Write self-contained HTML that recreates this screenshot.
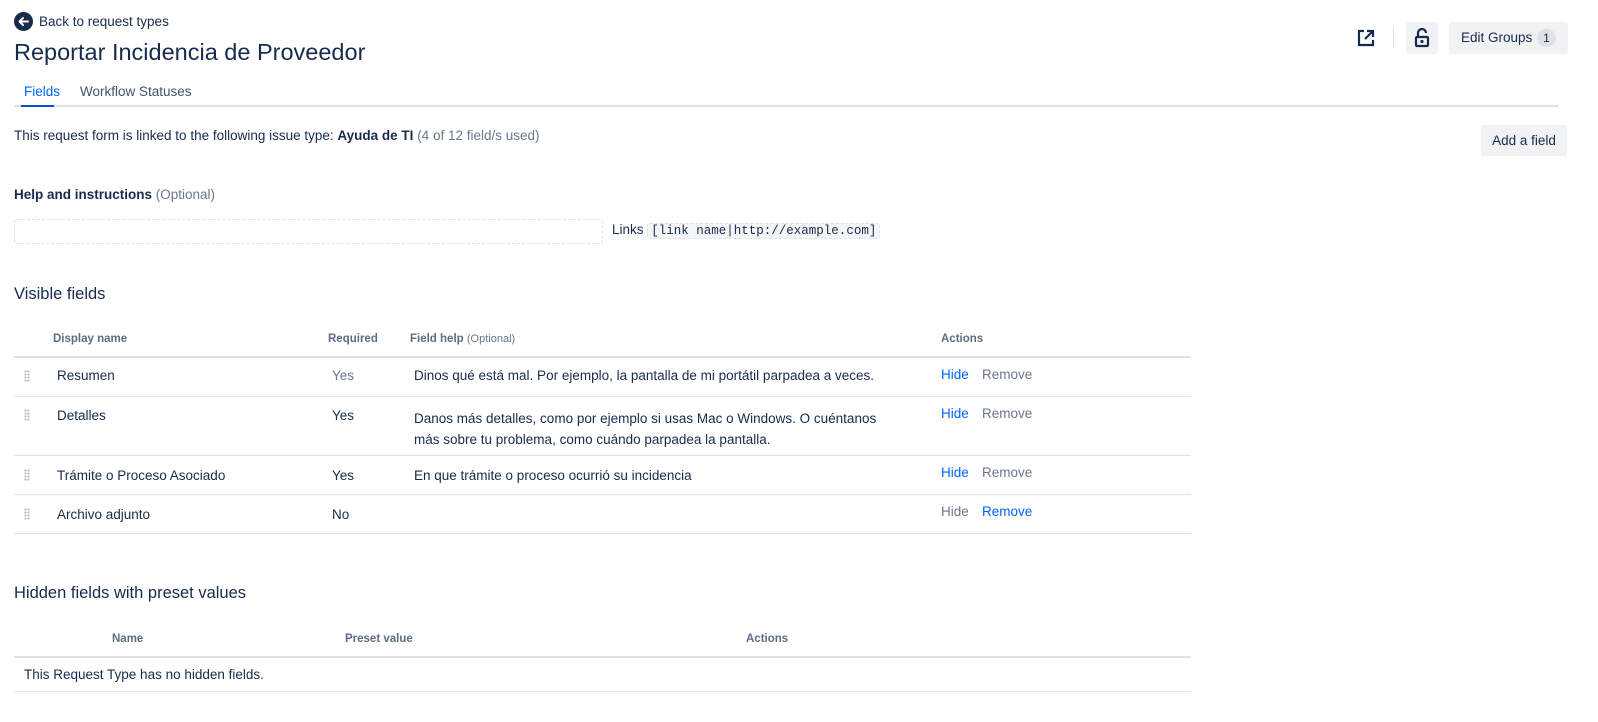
<!DOCTYPE html>
<html><head><meta charset="utf-8"><style>
*{margin:0;padding:0;box-sizing:border-box}
body{width:1598px;height:722px;background:#fff;font-family:"Liberation Sans",sans-serif;color:#172b4d;font-size:13.5px;position:relative;overflow:hidden}
.a{position:absolute;white-space:nowrap}
.g{color:#6b778c}
.h{font-size:11.5px;font-weight:bold;color:#5e6c84}
.line{position:absolute;height:1px;background:#dfe1e6}
.b{color:#0065ff}
.dots{position:absolute;width:6px;height:12px;background-image:radial-gradient(circle,#b3bac5 1px,transparent 1.2px);background-size:3px 3px}
</style></head><body>
<svg class="a" style="left:14px;top:12px" width="19" height="19" viewBox="0 0 19 19"><circle cx="9.5" cy="9.5" r="9.5" fill="#172b4d"/><path d="M14 9.5H5.5M9 6L5.5 9.5 9 13" stroke="#fff" stroke-width="2" fill="none" stroke-linecap="round" stroke-linejoin="round"/></svg>
<div class="a" style="left:39px;top:14px;font-size:13.5px">Back to request types</div>
<div class="a" style="left:14px;top:39px;font-size:23.5px">Reportar Incidencia de Proveedor</div>
<div class="a b" style="left:24px;top:84px;font-size:13.5px">Fields</div>
<div class="a" style="left:80px;top:84px;font-size:13.5px;color:#42526e">Workflow Statuses</div>
<div class="line" style="left:14px;top:105px;width:1544px;height:2px"></div>
<div class="a" style="left:21px;top:105px;width:33px;height:2px;background:#0052cc"></div>
<svg class="a" style="left:1356px;top:28px" width="20" height="20" viewBox="0 0 20 20"><path d="M8 3H3v14h14v-5" stroke="#172b4d" stroke-width="2.2" fill="none"/><path d="M11 3h6v6M17 3L9 11" stroke="#172b4d" stroke-width="2.2" fill="none"/></svg>
<div class="a" style="left:1393px;top:28px;width:1px;height:20px;background:#dfe1e6"></div>
<div class="a" style="left:1406px;top:22px;width:32px;height:32px;background:#f1f2f4;border-radius:3px"></div>
<svg class="a" style="left:1413px;top:27px" width="18" height="22" viewBox="0 0 18 22"><path d="M5 10V6a4 4 0 0 1 8 0" stroke="#172b4d" stroke-width="2.2" fill="none"/><rect x="3" y="10" width="12" height="9" rx="1" stroke="#172b4d" stroke-width="2.2" fill="none"/><circle cx="9" cy="14.5" r="1.6" fill="#172b4d"/></svg>
<div class="a" style="left:1449px;top:22px;width:119px;height:32px;background:#f1f2f4;border-radius:3px"></div>
<div class="a" style="left:1461px;top:30px;color:#172b4d">Edit Groups</div>
<div class="a" style="left:1537px;top:29px;width:19px;height:18px;border-radius:9px;background:#dfe1e6;font-size:12px;text-align:center;line-height:18px">1</div>
<div class="a" style="left:14px;top:128px">This request form is linked to the following issue type: <b>Ayuda de TI</b> <span class="g">(4 of 12 field/s used)</span></div>
<div class="a" style="left:1481px;top:125px;width:86px;height:31px;background:#f1f2f4;border-radius:3px;line-height:31px;text-align:center">Add a field</div>
<div class="a" style="left:14px;top:187px"><b>Help and instructions</b> <span class="g">(Optional)</span></div>
<div class="a" style="left:14px;top:219px;width:589px;height:25px;border:1px dashed #dfe1e6;border-radius:3px"></div>
<div class="a" style="left:612px;top:222px">Links <span style="font-family:'Liberation Mono',monospace;font-size:12.5px;background:#f4f5f7;border:1px dashed #dfe1e6;border-radius:3px;padding:0 3px">[link name|http://example.com]</span></div>
<div class="a" style="left:14px;top:285px;font-size:16.5px">Visible fields</div>
<div class="a h" style="left:53px;top:333px">Display name</div>
<div class="a h" style="left:328px;top:333px">Required</div>
<div class="a h" style="left:410px;top:333px">Field help <span style="font-weight:normal;font-size:11px;color:#6b778c">(Optional)</span></div>
<div class="a h" style="left:941px;top:333px">Actions</div>
<div class="line" style="left:14px;top:356px;width:1177px;height:2px"></div>
<div class="dots" style="left:24px;top:370px"></div>
<div class="a" style="left:57px;top:368px">Resumen</div>
<div class="a g" style="left:332px;top:368px">Yes</div>
<div class="a" style="left:414px;top:368px">Dinos qué está mal. Por ejemplo, la pantalla de mi portátil parpadea a veces.</div>
<div class="a b" style="left:941px;top:367px">Hide</div><div class="a g" style="left:982px;top:367px">Remove</div>
<div class="line" style="left:14px;top:396px;width:1177px"></div>
<div class="dots" style="left:24px;top:409px"></div>
<div class="a" style="left:57px;top:408px">Detalles</div>
<div class="a" style="left:332px;top:408px">Yes</div>
<div class="a" style="left:414px;top:408px;line-height:21px">Danos más detalles, como por ejemplo si usas Mac o Windows. O cuéntanos<br>más sobre tu problema, como cuándo parpadea la pantalla.</div>
<div class="a b" style="left:941px;top:406px">Hide</div><div class="a g" style="left:982px;top:406px">Remove</div>
<div class="line" style="left:14px;top:455px;width:1177px"></div>
<div class="dots" style="left:24px;top:469px"></div>
<div class="a" style="left:57px;top:468px">Trámite o Proceso Asociado</div>
<div class="a" style="left:332px;top:468px">Yes</div>
<div class="a" style="left:414px;top:468px">En que trámite o proceso ocurrió su incidencia</div>
<div class="a b" style="left:941px;top:465px">Hide</div><div class="a g" style="left:982px;top:465px">Remove</div>
<div class="line" style="left:14px;top:494px;width:1177px"></div>
<div class="dots" style="left:24px;top:508px"></div>
<div class="a" style="left:57px;top:507px">Archivo adjunto</div>
<div class="a" style="left:332px;top:507px">No</div>
<div class="a g" style="left:941px;top:504px">Hide</div><div class="a b" style="left:982px;top:504px">Remove</div>
<div class="line" style="left:14px;top:533px;width:1177px"></div>
<div class="a" style="left:14px;top:584px;font-size:16.5px">Hidden fields with preset values</div>
<div class="a h" style="left:112px;top:633px">Name</div>
<div class="a h" style="left:345px;top:633px">Preset value</div>
<div class="a h" style="left:746px;top:633px">Actions</div>
<div class="line" style="left:14px;top:656px;width:1177px;height:2px"></div>
<div class="a" style="left:24px;top:667px">This Request Type has no hidden fields.</div>
<div class="line" style="left:14px;top:691px;width:1177px"></div>
</body></html>
